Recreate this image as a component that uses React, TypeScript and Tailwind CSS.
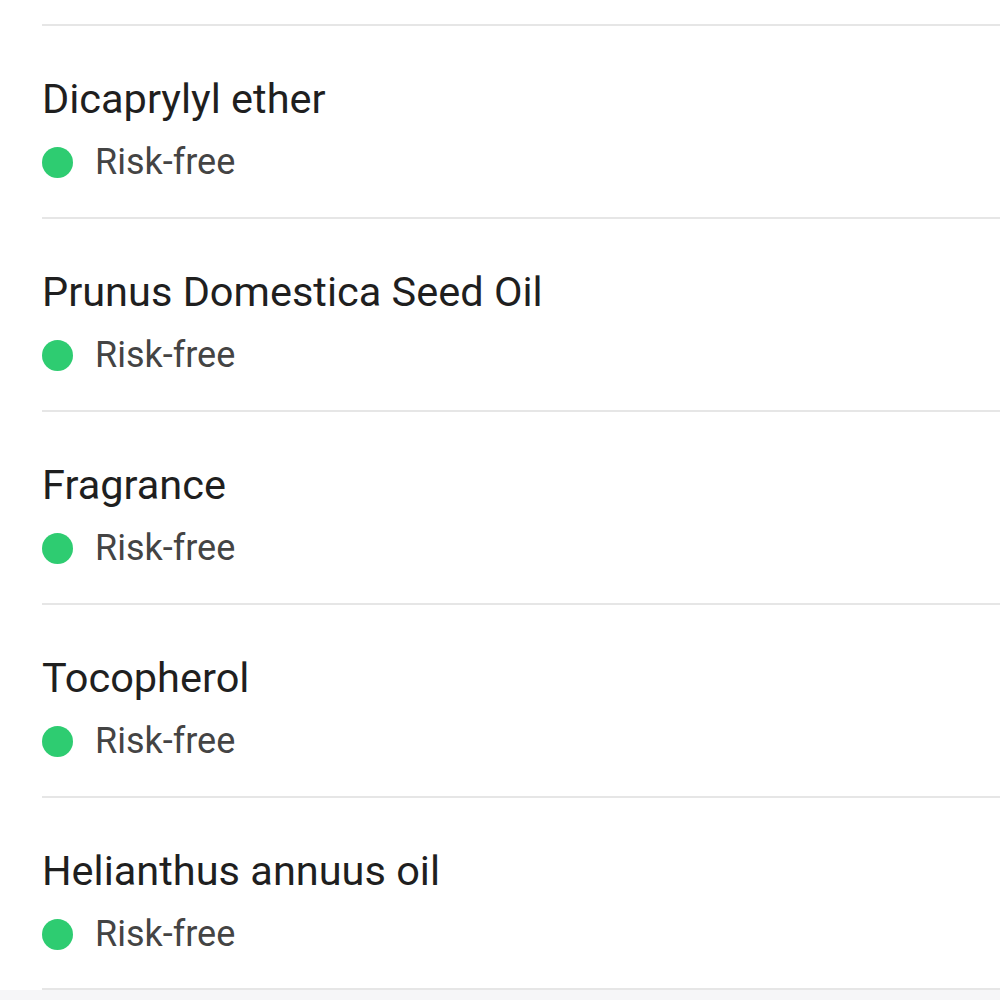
import React from "react";

const items = [
  "Dicaprylyl ether",
  "Prunus Domestica Seed Oil",
  "Fragrance",
  "Tocopherol",
  "Helianthus annuus oil",
];

export default function App() {
  return (
    <div
      className="w-[1000px] h-[1000px] bg-[#f6f6f8] overflow-hidden"
      style={{ fontFamily: "Roboto, 'Noto Sans', sans-serif" }}
    >
      <div className="bg-white">
        <div className="h-[26px] ml-[42px] border-b-[2px] border-[#e6e6e6]" />
        {items.map((name, i) => (
          <div
            key={name}
            className={`ml-[42px] border-b-[2px] border-[#e6e6e6] ${i === items.length - 1 ? "h-[192px]" : "h-[193px]"}`}
          >
            <div className="pt-[49px] text-[41.5px] leading-[48px] text-[#1f1f1f]">{name}</div>
            <div className="mt-[17px] flex items-center h-[44px]">
              <span className="w-[31px] h-[31px] rounded-full bg-[#2ecc71] shrink-0" />
              <span className="ml-[22px] text-[36px] leading-[44px] text-[#444444]">Risk-free</span>
            </div>
          </div>
        ))}
      </div>
    </div>
  );
}
